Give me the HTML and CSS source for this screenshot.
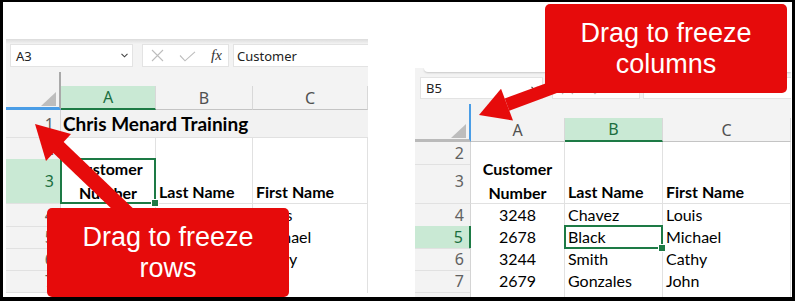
FILE: index.html
```html
<!DOCTYPE html>
<html>
  <head>
    <meta charset="utf-8">
    <title>Freeze panes</title>
    <link rel="stylesheet" href="styles.css">
</head>
<body>
  <div class="frame">

    <!-- left sheet: rows -->
    <div class="sheet sheet-left">
      <div class="toolbar">
        <div class="namebox">A3
          <svg class="chev" width="7" height="5" viewBox="0 0 7 5"><polyline points="0.5,0.8 3.5,3.8 6.5,0.8" fill="none" stroke="#444" stroke-width="1.1"/></svg>
        </div>
        <div class="fbox">
          <svg class="ico-x" width="13" height="13" viewBox="0 0 13 13"><path d="M1 1 L12 12 M12 1 L1 12" stroke="#bdbdbd" stroke-width="1.1" fill="none"/></svg>
          <svg class="ico-ok" width="17" height="11" viewBox="0 0 17 11"><polyline points="1,4.5 6,9.8 16,0.8" stroke="#bdbdbd" stroke-width="1.1" fill="none"/></svg>
          <span class="fx">fx</span>
        </div>
        <div class="formula">Customer</div>
      </div>
      <div class="grid">
        <div class="row head">
          <div class="corner"><span class="tri"></span></div>
          <div class="col sel">A</div>
          <div class="col">B</div>
          <div class="col">C</div>
        </div>
        <div class="row h28">
          <div class="rh">1</div>
          <div class="cell title">Chris Menard Training</div>
        </div>
        <div class="row h21">
          <div class="rh">2</div>
          <div class="cell"></div><div class="cell"></div><div class="cell"></div>
        </div>
        <div class="row h45">
          <div class="rh sel">3</div>
          <div class="cell wrap bold active"><span>Customer</span><span>Number</span></div>
          <div class="cell bold">Last Name</div>
          <div class="cell bold">First Name</div>
        </div>
        <!-- A and B under the callout are covered -->
        <div class="row h22">
          <div class="rh">4</div>
          <div class="cell"></div><div class="cell"></div><div class="cell">Louis</div>
        </div>
        <div class="row h22">
          <div class="rh">5</div>
          <div class="cell"></div><div class="cell"></div><div class="cell">Michael</div>
        </div>
        <div class="row h22">
          <div class="rh">6</div>
          <div class="cell"></div><div class="cell"></div><div class="cell">Cathy</div>
        </div>
        <div class="row h22">
          <div class="rh">7</div>
          <div class="cell"></div><div class="cell"></div><div class="cell">John</div>
        </div>
        <div class="row h22">
          <div class="rh"></div>
          <div class="cell"></div><div class="cell"></div><div class="cell"></div>
        </div>
      </div>
    </div>

    <!-- right sheet: columns -->
    <div class="sheet sheet-right">
      <div class="toolbar">
        <div class="namebox">B5
          <svg class="chev" width="7" height="5" viewBox="0 0 7 5"><polyline points="0.5,0.8 3.5,3.8 6.5,0.8" fill="none" stroke="#444" stroke-width="1.1"/></svg>
        </div>
        <div class="fbox">
          <svg class="ico-x" width="13" height="13" viewBox="0 0 13 13"><path d="M1 1 L12 12 M12 1 L1 12" stroke="#bdbdbd" stroke-width="1.1" fill="none"/></svg>
          <svg class="ico-ok" width="17" height="11" viewBox="0 0 17 11"><polyline points="1,4.5 6,9.8 16,0.8" stroke="#bdbdbd" stroke-width="1.1" fill="none"/></svg>
        </div>
        <div class="formula"></div>
      </div>
      <div class="grid">
        <div class="row head">
          <div class="corner"><span class="tri"></span></div>
          <div class="col">A</div>
          <div class="col sel">B</div>
          <div class="col">C</div>
        </div>
        <div class="row h17">
          <div class="rh">2</div>
          <div class="cell"></div><div class="cell"></div><div class="cell"></div>
        </div>
        <div class="row h45">
          <div class="rh">3</div>
          <div class="cell wrap bold"><span>Customer</span><span>Number</span></div>
          <div class="cell bold">Last Name</div>
          <div class="cell bold">First Name</div>
        </div>
        <div class="row h22">
          <div class="rh">4</div>
          <div class="cell num">3248</div><div class="cell">Chavez</div><div class="cell">Louis</div>
        </div>
        <div class="row h22">
          <div class="rh sel">5</div>
          <div class="cell num">2678</div><div class="cell active">Black</div><div class="cell">Michael</div>
        </div>
        <div class="row h22">
          <div class="rh">6</div>
          <div class="cell num">3244</div><div class="cell">Smith</div><div class="cell">Cathy</div>
        </div>
        <div class="row h22">
          <div class="rh">7</div>
          <div class="cell num">2679</div><div class="cell">Gonzales</div><div class="cell">John</div>
        </div>
        <div class="row h22">
          <div class="rh"></div>
          <div class="cell"></div><div class="cell"></div><div class="cell"></div>
        </div>
      </div>
    </div>

    <!-- arrows over both sheets -->
    <svg class="arrows" width="795" height="301" viewBox="0 0 795 301">
      <line x1="58" y1="147" x2="128" y2="214" stroke="#e60b0b" stroke-width="15"/>
      <polygon points="35,124 71,134 46,161" fill="#e60b0b"/>
      <line x1="507" y1="104.6" x2="560" y2="85" stroke="#e60b0b" stroke-width="13"/>
      <polygon points="479,115 501,88.7 513,120.5" fill="#e60b0b"/>
    </svg>

    <div class="callout callout-rows">Drag to freeze<br>rows</div>
    <div class="callout callout-cols">Drag to freeze<br>columns</div>
  </div>
</body>
</html>
```

FILE: styles.css
```css
* {
  box-sizing: border-box;
}

body {
  margin: 0;
  background: #fff;
}

.frame {
  position: relative;
  width: 795px;
  height: 301px;
  border: 3px solid #000;
  border-top-width: 2px;
  border-bottom-width: 4px;
  display: flex;
  align-items: flex-start;
  background: #fff;
  overflow: hidden;
  font-family: "Noto Sans", sans-serif;
}

/* sheets */
.sheet {
  background: #f3f3f3;
  overflow: hidden;
  display: flex;
  flex-direction: column;
}

.sheet-left {
  width: 362px;
  height: 254px;
  margin: 37px 0 0 3px;
}

.sheet-right {
  width: 376px;
  height: 229px;
  margin: 66px 0 0 47px;
}

.toolbar {
  display: flex;
  align-items: flex-start;
  flex-shrink: 0;
}

.sheet-left .toolbar {
  height: 33px;
  padding: 5px 0 0 4px;
  background: linear-gradient(#dcdcdc, #f3f3f3 5px);
}

.sheet-right .toolbar {
  position: relative;
  height: 36px;
  padding: 9px 0 0 5px;
}

.sheet-right .toolbar::before {
  content: "";
  position: absolute;
  left: 9px;
  right: 0;
  top: 0;
  height: 4px;
  background: #fff;
  border-radius: 0 0 0 6px;
  box-shadow: 0 1px 2px rgba(0, 0, 0, 0.18);
}

.namebox,
.fbox,
.formula {
  height: 23px;
  background: #fff;
  border: 1px solid #e3e3e3;
  display: flex;
  align-items: center;
  font-size: 13px;
  color: #222;
}

.sheet-right .namebox,
.sheet-right .fbox,
.sheet-right .formula {
  height: 22px;
}

.namebox {
  width: 123px;
  padding: 0 4px 0 5px;
  justify-content: space-between;
}

.fbox {
  width: 87px;
  margin-left: 9px;
}

.sheet-right .fbox {
  width: 88px;
}

.ico-x {
  margin-left: 8px;
}

.ico-ok {
  margin-left: 15px;
  margin-top: 2px;
}

.fx {
  margin-left: 15px;
  font-family: "Liberation Serif", serif;
  font-style: italic;
  font-size: 15px;
  color: #333;
}

.formula {
  flex: 1;
  margin-left: 4px;
  padding-left: 3px;
  border-right: none;
}

.sheet-right .formula {
  margin-left: 3px;
}

/* grid */
.row {
  display: grid;
}

.sheet-left .row {
  grid-template-columns: 55px 95px 97px 1fr;
}

.sheet-right .row {
  grid-template-columns: 56px 94px 98px 1fr;
}

.head { height: 38px; }
.h17 { height: 17px; }
.h21 { height: 21px; }
.h22 { height: 22px; }
.h28 { height: 28px; }
.h45 { height: 45px; }

.corner {
  position: relative;
}

.sheet-left .corner {
  border-right: 2px solid #a9a9a9;
  border-bottom: 3px solid #4a9de6;
}

.sheet-right .corner {
  border-right: 2px solid #4a9de6;
  border-bottom: 3px solid #bababa;
}

.tri {
  position: absolute;
  right: 3px;
  bottom: 1px;
  width: 15px;
  height: 14px;
  background: #bdbdbd;
  clip-path: polygon(100% 0, 100% 100%, 0 100%);
}

.col {
  align-self: end;
  height: 24px;
  display: flex;
  align-items: center;
  justify-content: center;
  border-right: 1px solid #d8d8d8;
  border-bottom: 1px solid #c4c4c4;
  font-size: 16px;
  color: #505050;
}

.col.sel {
  background: #c9e9d4;
  color: #1b6e3f;
  border-bottom: 2px solid #1d7a45;
}

.rh {
  display: flex;
  align-items: center;
  justify-content: flex-end;
  padding-right: 6px;
  font-size: 16px;
  color: #616161;
  border-right: 1px solid #d4d4d4;
  border-bottom: 1px solid #e1e1e1;
}

.rh.sel {
  background: #c9e9d4;
  color: #1b6e3f;
}

.sheet-right .rh.sel {
  border-right: 2px solid #1d7a45;
}

.cell {
  display: flex;
  align-items: flex-end;
  padding: 0 3px;
  background: #fff;
  border-right: 1px solid #e1e1e1;
  border-bottom: 1px solid #e1e1e1;
  font-family: Lato, sans-serif;
  font-size: 16px;
  line-height: 22px;
  color: #000;
  white-space: nowrap;
  overflow: hidden;
}

.bold {
  font-weight: 700;
}

.num {
  justify-content: center;
}

.wrap {
  flex-direction: column;
  justify-content: flex-end;
  align-items: center;
  gap: 4px;
  line-height: 20px;
}

.title {
  grid-column: 2 / -1;
  align-items: center;
  padding-left: 2px;
  background: #f2f2f2;
  border-right: none;
  font-weight: 700;
  font-size: 19px;
}

.cell.active {
  position: relative;
  overflow: visible;
  z-index: 2;
}

.cell.active::after {
  content: "";
  position: absolute;
  left: -1px;
  top: -1px;
  right: -1px;
  bottom: -1px;
  border: 2px solid #1d7a45;
}

.cell.active::before {
  content: "";
  position: absolute;
  right: -4px;
  bottom: -4px;
  width: 6px;
  height: 6px;
  background: #1d7a45;
  border: 1px solid #fff;
  z-index: 1;
}

/* overlays */
.arrows {
  position: absolute;
  left: -3px;
  top: -2px;
  z-index: 3;
}

.callout {
  position: absolute;
  z-index: 4;
  width: 242px;
  height: 89px;
  background: #e60b0b;
  border-radius: 5px;
  color: #fff;
  font-family: "Liberation Sans", Arial, sans-serif;
  font-size: 27px;
  line-height: 31px;
  display: flex;
  align-items: center;
  justify-content: center;
  text-align: center;
}

.callout-rows {
  left: 44px;
  top: 206px;
}

.callout-cols {
  left: 542px;
  top: 2px;
}
```
